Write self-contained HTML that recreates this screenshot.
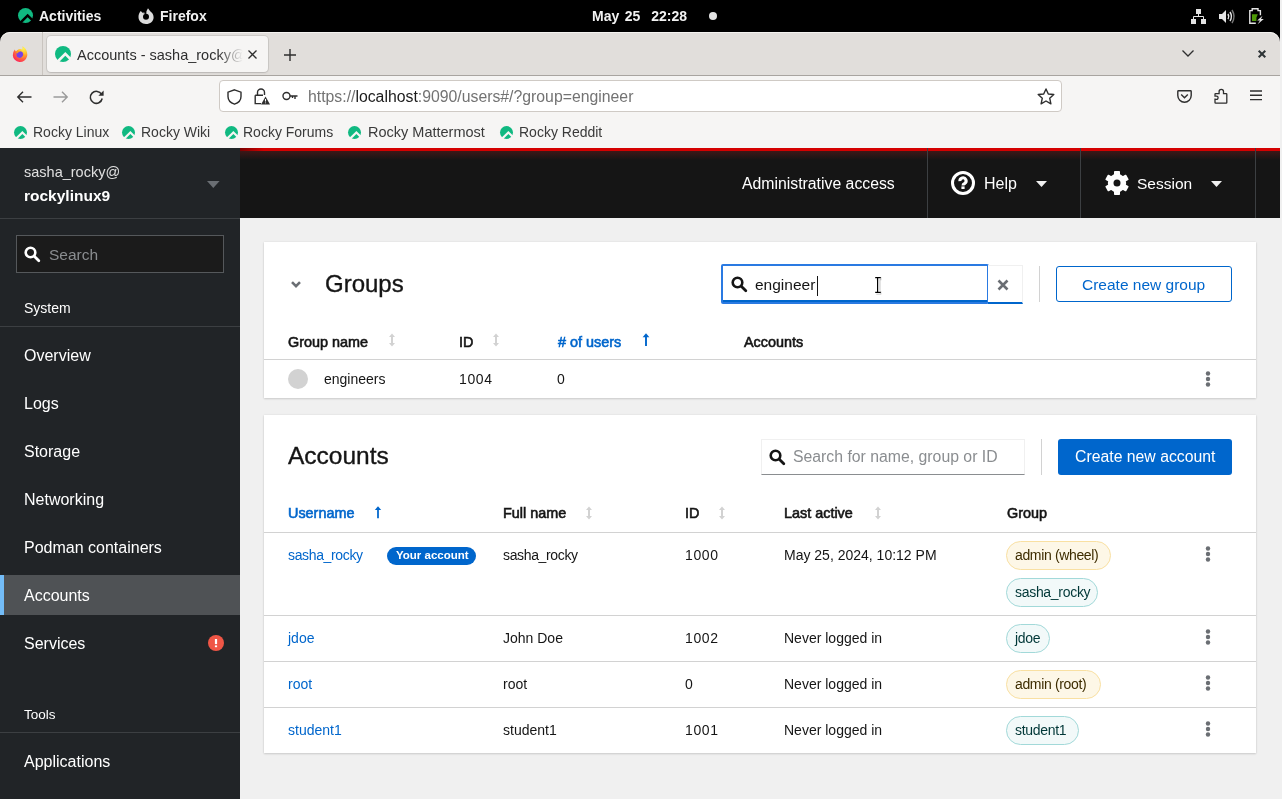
<!DOCTYPE html>
<html><head><meta charset="utf-8">
<style>
html,body{margin:0;padding:0;}
body{width:1282px;height:799px;overflow:hidden;position:relative;background:#ebebeb;font-family:"Liberation Sans",sans-serif;}
.a{position:absolute;}
.t{position:absolute;line-height:1;white-space:nowrap;will-change:transform;}
svg{position:absolute;display:block;overflow:visible;}
</style></head><body>
<svg width="0" height="0" style="position:absolute;left:0;top:0"><defs><mask id="rm" maskUnits="userSpaceOnUse" x="-2" y="-2" width="20" height="20"><rect x="-2" y="-2" width="20" height="20" fill="#fff"/><path d="M-2,18.3L10.3,6L22.6,18.3V22.1L10.3,9.8L-2,22.1Z" fill="#000"/></mask></defs></svg>
<!-- GNOME top bar -->
<div class="a" style="left:0;top:0;width:1280px;height:44px;background:#000;"></div>
<div class="a" style="left:1280px;top:0;width:2px;height:799px;background:#f0f0f0;"></div>
<!-- ROCKY ICON activities -->
<svg style="left:18px;top:8px" width="15" height="15" viewBox="0 0 16 16"><circle cx="8" cy="8" r="8" fill="#10b981" mask="url(#rm)"/></svg>
<div class="t" style="left:39px;top:9px;font-size:14px;font-weight:bold;color:#f2f2f2;">Activities</div>
<svg style="left:138px;top:8px" width="16" height="16" viewBox="0 0 16 16"><path fill="#dcdcdc" fill-rule="evenodd" d="M10,0.2L12.2,3.2C14.3,4.5 15.6,6.7 15.6,9.2C15.6,13.2 12.2,16 8,16C3.8,16 0.5,13 0.5,9C0.5,6.7 1.3,4.6 2.8,3L4.4,4.8L6.2,4.4L8.6,5.4C8.2,4.6 8.3,3.6 8.8,2.6Z M8,5.7A3,3 0 1 0 8,11.7A3,3 0 1 0 8,5.7Z"/><path d="M8.2,6.2L5.2,4.9L7.9,4.1Z" fill="#000"/></svg>
<div class="t" style="left:160px;top:9px;font-size:14px;font-weight:bold;color:#f2f2f2;">Firefox</div>
<div class="t" style="left:592px;top:9px;font-size:14px;font-weight:bold;color:#f2f2f2;word-spacing:1.6px;">May 25&nbsp; 22:28</div>
<div class="a" style="left:709px;top:12px;width:8px;height:8px;border-radius:50%;background:#e4e4e4;"></div>
<!-- network -->
<svg style="left:1191px;top:9px" width="16" height="15" viewBox="0 0 16 15"><rect x="5" y="0" width="5" height="5" fill="#e4e4e4"/><rect x="0" y="10" width="5" height="5" fill="#e4e4e4"/><rect x="10" y="10" width="5" height="5" fill="#e4e4e4"/><path d="M7.5,5V8M2.5,10V7.5H12.5V10" stroke="#e4e4e4" stroke-width="1" fill="none"/></svg>
<!-- volume -->
<svg style="left:1219px;top:9px" width="16" height="15" viewBox="0 0 16 15"><path d="M0,5H3L7,1V14L3,10H0Z" fill="#e4e4e4"/><path d="M9,5 Q10.5,7.5 9,10" stroke="#e4e4e4" stroke-width="1.5" fill="none"/><path d="M11,3 Q13.8,7.5 11,12" stroke="#e4e4e4" stroke-width="1.5" fill="none"/><path d="M13,1 Q17,7.5 13,14" stroke="#777" stroke-width="1.5" fill="none"/></svg>
<!-- battery -->
<svg style="left:1249px;top:8px" width="15" height="16" viewBox="0 0 15 16"><path d="M6.8,15.2H0.8V2.6H3.2V0.8H9V2.6H11.4V7.2" stroke="#e4e4e4" stroke-width="1.4" fill="none"/><path d="M3,6.2H8.8L7.4,9.6V13H3Z" fill="#4e9a06"/><path d="M13.5,7.8L8.2,12.6H11L8.6,16.2L14.8,10.9H12Z" fill="#e4e4e4"/></svg>

<!-- FIREFOX CHROME -->
<div class="a" style="left:0;top:32px;width:1280px;height:43px;background:#e1dedb;border-radius:10px 10px 0 0;box-shadow:inset 0 1px 0 #f4f2f0;"></div>
<div class="a" style="left:0;top:75px;width:1280px;height:1px;background:#a8a4a0;"></div>
<div class="a" style="left:0;top:76px;width:1280px;height:72px;background:#f6f5f4;"></div>
<!-- firefox logo -->
<svg style="left:12px;top:46px" width="16" height="16" viewBox="0 0 16 16"><defs><radialGradient id="ffg" cx="0.75" cy="0.15" r="1"><stop offset="0" stop-color="#fff44f"/><stop offset="0.35" stop-color="#ffbd2e"/><stop offset="0.6" stop-color="#ff7139"/><stop offset="0.85" stop-color="#ff3750"/><stop offset="1" stop-color="#f5156c"/></radialGradient></defs><path d="M10.5,0.2Q14.2,2.2 15,6.5Q15.6,9 15,10.5A7.2,7.2 0 0 1 0.8,9.2Q0.8,6 2.8,3.6Q3.2,5 4,5.6Q4.8,3.8 6.8,3.2Q8.8,2.8 10.2,3.6Q10.8,2 10.5,0.2Z" fill="url(#ffg)"/><circle cx="7.8" cy="8.6" r="3.3" fill="#7542e5"/><path d="M4.2,5.2Q6.5,4.2 8.6,5.6Q6.6,5.8 5.4,7.4Q4.6,6.4 4.2,5.2Z" fill="#ff9a1f"/><path d="M11.2,6.5Q11.8,10.6 8.6,12Q11.5,12.2 12.6,9.2Z" fill="#ff9a1f"/></svg>
<div class="a" style="left:42px;top:32px;width:1px;height:43px;background:#c9c4bf;"></div>
<!-- active tab -->
<div class="a" style="left:47px;top:36px;width:221px;height:36px;background:#f6f5f4;border-radius:4px;box-shadow:0 0 0 1px rgba(0,0,0,0.08),0 1px 2px rgba(0,0,0,0.1);"></div>
<svg style="left:55px;top:46px" width="16" height="16" viewBox="0 0 16 16"><circle cx="8" cy="8" r="8" fill="#10b981" mask="url(#rm)"/></svg>
<div class="t" style="left:77px;top:48px;font-size:14.5px;color:#2e2e2e;width:166px;overflow:hidden;-webkit-mask-image:linear-gradient(90deg,#000 85%,transparent);">Accounts - sasha_rocky@localhost</div>
<svg style="left:248px;top:50px" width="9" height="9" viewBox="0 0 9 9"><path d="M0.5,0.5L8.5,8.5M8.5,0.5L0.5,8.5" stroke="#2e2e2e" stroke-width="1.3"/></svg>
<svg style="left:284px;top:49px" width="12" height="12" viewBox="0 0 12 12"><path d="M6,0V12M0,6H12" stroke="#2e2e2e" stroke-width="1.4"/></svg>
<svg style="left:1182px;top:50px" width="12" height="7" viewBox="0 0 12 7"><path d="M0.5,0.5L6,6L11.5,0.5" stroke="#2e2e2e" stroke-width="1.3" fill="none"/></svg>
<svg style="left:1258px;top:50px" width="8" height="8" viewBox="0 0 8 8"><path d="M0.7,0.7L7.3,7.3M7.3,0.7L0.7,7.3" stroke="#2e3436" stroke-width="2"/></svg>

<!-- nav bar -->
<svg style="left:17px;top:91px" width="15" height="12" viewBox="0 0 15 12"><path d="M14.5,6H1.2M6,0.8L0.8,6L6,11.2" stroke="#2e2e2e" stroke-width="1.4" fill="none"/></svg>
<svg style="left:53px;top:91px" width="15" height="12" viewBox="0 0 15 12"><path d="M0.5,6H13.8M9,0.8L14.2,6L9,11.2" stroke="#9a9a9a" stroke-width="1.4" fill="none"/></svg>
<svg style="left:89px;top:90px" width="15" height="14" viewBox="0 0 15 14"><path d="M12.6,4.5 A6,6 0 1 0 13.2,8.5" stroke="#2e2e2e" stroke-width="1.5" fill="none"/><path d="M14.6,0.6V5.8H9.4Z" fill="#2e2e2e"/></svg>
<div class="a" style="left:219px;top:80px;width:841px;height:30px;background:#fff;border:1px solid #cfcac5;border-radius:4px;"></div>
<svg style="left:227px;top:89px" width="15" height="16" viewBox="0 0 15 16"><path d="M7.5,0.8L14,3.2V7.5C14,11.2 11.2,14 7.5,15.2C3.8,14 1,11.2 1,7.5V3.2Z" stroke="#2e2e2e" stroke-width="1.4" fill="none"/></svg>
<svg style="left:254px;top:88px" width="16" height="17" viewBox="0 0 16 17"><path d="M3.5,7V4.5A3.5,3.5 0 0 1 10.5,4.5V7" stroke="#2e2e2e" stroke-width="1.4" fill="none"/><path d="M1.2,7.3H9M1.2,7.3V15.6H7" stroke="#2e2e2e" stroke-width="1.4" fill="none"/><path d="M11.5,8.5L16,16.5H7Z" fill="#2e2e2e"/><path d="M11.5,11V13.6M11.5,14.4V15.3" stroke="#fff" stroke-width="1.1"/></svg>
<svg style="left:282px;top:91px" width="16" height="10" viewBox="0 0 16 10"><circle cx="4.5" cy="5" r="3.5" stroke="#2e2e2e" stroke-width="1.4" fill="none"/><path d="M8,5H15.5M13,5V8M10.5,5V7" stroke="#2e2e2e" stroke-width="1.4" fill="none"/></svg>
<div class="t" style="left:308px;top:89px;font-size:15.8px;color:#737373;"><span>https://</span><span style="color:#1b1b1b">localhost</span>:9090/users#/?group=engineer</div>
<svg style="left:1037px;top:88px" width="18" height="17" viewBox="0 0 18 17"><path d="M9,1L11.3,6L16.8,6.5L12.7,10.2L13.9,15.8L9,13L4.1,15.8L5.3,10.2L1.2,6.5L6.7,6Z" stroke="#2e2e2e" stroke-width="1.4" fill="none" stroke-linejoin="round"/></svg>
<svg style="left:1177px;top:90px" width="15" height="13" viewBox="0 0 15 13"><path d="M1.5,0.8H13.5Q14.2,0.8 14.2,1.5V5.5A6.7,6.7 0 0 1 0.8,5.5V1.5Q0.8,0.8 1.5,0.8Z" stroke="#2e2e2e" stroke-width="1.4" fill="none"/><path d="M4.2,4.5L7.5,7.7L10.8,4.5" stroke="#2e2e2e" stroke-width="1.4" fill="none"/></svg>
<svg style="left:1214px;top:88px" width="14" height="16" viewBox="0 0 14 16"><path d="M1,10.5V14.6Q1,15.2 1.6,15.2H12.2Q12.8,15.2 12.8,14.6V6.2Q12.8,5.6 12.2,5.6H9.5V3.5A2.2,2.2 0 0 0 5.1,3.5V5.6H1.6Q1,5.6 1,6.2V8.2H2.5A1.6,1.6 0 0 1 2.5,11.4H1Z" stroke="#2e2e2e" stroke-width="1.3" fill="none"/></svg>
<svg style="left:1250px;top:90px" width="12" height="11" viewBox="0 0 12 11"><path d="M0,1H12M0,5.3H12M0,9.6H12" stroke="#2e2e2e" stroke-width="1.4"/></svg>

<!-- bookmarks -->
<svg style="left:14px;top:126px" width="13" height="13" viewBox="0 0 16 16"><circle cx="8" cy="8" r="8" fill="#10b981" mask="url(#rm)"/></svg>
<div class="t" style="left:32.5px;top:124.6px;font-size:14px;color:#3a3a3a;">Rocky Linux</div>
<svg style="left:121.5px;top:126px" width="13" height="13" viewBox="0 0 16 16"><circle cx="8" cy="8" r="8" fill="#10b981" mask="url(#rm)"/></svg>
<div class="t" style="left:141px;top:124.6px;font-size:14px;color:#3a3a3a;">Rocky Wiki</div>
<svg style="left:224.5px;top:126px" width="13" height="13" viewBox="0 0 16 16"><circle cx="8" cy="8" r="8" fill="#10b981" mask="url(#rm)"/></svg>
<div class="t" style="left:243.4px;top:124.6px;font-size:14px;color:#3a3a3a;">Rocky Forums</div>
<svg style="left:348px;top:126px" width="13" height="13" viewBox="0 0 16 16"><circle cx="8" cy="8" r="8" fill="#10b981" mask="url(#rm)"/></svg>
<div class="t" style="left:367.5px;top:124.6px;font-size:14.5px;color:#3a3a3a;">Rocky Mattermost</div>
<svg style="left:499.5px;top:126px" width="13" height="13" viewBox="0 0 16 16"><circle cx="8" cy="8" r="8" fill="#10b981" mask="url(#rm)"/></svg>
<div class="t" style="left:518.7px;top:124.6px;font-size:14px;color:#3a3a3a;">Rocky Reddit</div>

<!-- COCKPIT SIDEBAR -->
<div class="a" style="left:0;top:148px;width:240px;height:651px;background:#212427;"></div>
<div class="t" style="left:24px;top:164.7px;font-size:14.5px;color:#e0e0e0;">sasha_rocky@</div>
<div class="t" style="left:24px;top:187.9px;font-size:15.5px;font-weight:bold;color:#fff;">rockylinux9</div>
<svg style="left:207px;top:181px" width="13" height="8" viewBox="0 0 13 8"><path d="M0,0H12.6L6.3,7Z" fill="#6a6e73"/></svg>
<div class="a" style="left:0;top:218px;width:240px;height:1px;background:#3c3f42;"></div>
<div class="a" style="left:16px;top:235px;width:206px;height:36px;background:#1b1b1b;border:1px solid #55585b;"></div>
<svg style="left:24px;top:246px" width="16" height="16" viewBox="0 0 16 16"><circle cx="6.5" cy="6.5" r="4.8" stroke="#fff" stroke-width="2.6" fill="none"/><path d="M10,10L14.8,14.8" stroke="#fff" stroke-width="2.8" stroke-linecap="round"/></svg>
<div class="t" style="left:49px;top:246.9px;font-size:15.5px;color:#8a8d90;">Search</div>
<div class="t" style="left:24px;top:301.2px;font-size:14px;color:#fff;">System</div>
<div class="a" style="left:0;top:326px;width:240px;height:1px;background:#3c3f42;"></div>
<div class="t" style="left:24px;top:347.5px;font-size:16px;color:#fff;">Overview</div>
<div class="t" style="left:24px;top:395.5px;font-size:16px;color:#fff;">Logs</div>
<div class="t" style="left:24px;top:443.5px;font-size:16px;color:#fff;">Storage</div>
<div class="t" style="left:24px;top:491.5px;font-size:16px;color:#fff;">Networking</div>
<div class="t" style="left:24px;top:539.5px;font-size:16px;color:#fff;">Podman containers</div>
<div class="a" style="left:0;top:575px;width:240px;height:40px;background:#4f5255;"></div>
<div class="a" style="left:0;top:575px;width:4px;height:40px;background:#73bcf7;"></div>
<div class="t" style="left:24px;top:587.5px;font-size:16px;color:#fff;">Accounts</div>
<div class="t" style="left:24px;top:635.5px;font-size:16px;color:#fff;">Services</div>
<svg style="left:208px;top:635px" width="16" height="16" viewBox="0 0 16 16"><circle cx="8" cy="8" r="8" fill="#ef5646"/><rect x="6.9" y="4" width="2.2" height="5.1" fill="#fff"/><rect x="6.9" y="10.4" width="2.2" height="1.8" fill="#fff"/></svg>
<div class="t" style="left:24px;top:707.9px;font-size:13.5px;color:#fff;">Tools</div>
<div class="a" style="left:0;top:732px;width:240px;height:1px;background:#3c3f42;"></div>
<div class="t" style="left:24px;top:753.5px;font-size:16px;color:#fff;">Applications</div>

<!-- HEADER -->
<div class="a" style="left:240px;top:148px;width:1040px;height:70px;background:#151515;"></div>
<div class="a" style="left:240px;top:151px;width:1040px;height:9px;background:linear-gradient(180deg,#3d1717,rgba(21,21,21,0));"></div>
<div class="a" style="left:240px;top:148px;width:1040px;height:3px;background:linear-gradient(90deg,#7a0000,#d40000 24px);"></div>
<div class="a" style="left:927px;top:148px;width:1px;height:70px;background:#3c3f42;"></div>
<div class="a" style="left:1080px;top:148px;width:1px;height:70px;background:#3c3f42;"></div>
<div class="a" style="left:1255px;top:148px;width:1px;height:70px;background:#3c3f42;"></div>
<div class="t" style="left:742px;top:175.8px;font-size:15.8px;color:#fff;">Administrative access</div>
<svg style="left:951px;top:171px" width="24" height="24" viewBox="0 0 24 24"><circle cx="12" cy="12" r="10.5" stroke="#fff" stroke-width="3" fill="none"/><path d="M8.9,10.2A3.1,3.1 0 1 1 13.7,12.5Q12,13.3 12,14.6" stroke="#fff" stroke-width="3.1" fill="none"/><rect x="10.4" y="15.4" width="3.2" height="2.6" fill="#fff"/></svg>
<div class="t" style="left:984px;top:175.8px;font-size:16px;color:#fff;">Help</div>
<svg style="left:1035.5px;top:181px" width="11" height="6" viewBox="0 0 11 6"><path d="M0,0H11L5.5,6Z" fill="#f0f0f0"/></svg>
<svg style="left:1105px;top:171px" width="24" height="24" viewBox="0 0 24 24"><g fill="#fff"><circle cx="12" cy="12" r="9.2"/><rect x="9" y="0" width="6" height="24" rx="0.8"/><rect x="9" y="0" width="6" height="24" rx="0.8" transform="rotate(60 12 12)"/><rect x="9" y="0" width="6" height="24" rx="0.8" transform="rotate(120 12 12)"/></g><circle cx="12" cy="12" r="3.5" fill="#151515"/></svg>
<div class="t" style="left:1137px;top:175.8px;font-size:15.5px;color:#fff;">Session</div>
<svg style="left:1211px;top:181px" width="11" height="6" viewBox="0 0 11 6"><path d="M0,0H11L5.5,6Z" fill="#f0f0f0"/></svg>

<!-- MAIN -->
<div class="a" style="left:240px;top:218px;width:1040px;height:581px;background:#f0f0f0;"></div>
<!-- GROUPS CARD -->
<div class="a" style="left:264px;top:242px;width:992px;height:156px;background:#fff;box-shadow:0 1px 2px rgba(3,3,3,0.14),0 0 2px rgba(3,3,3,0.08);"></div>
<svg style="left:291px;top:281px" width="10" height="7" viewBox="0 0 10 7"><path d="M1,1.2L5,5.2L9,1.2" stroke="#6a6e73" stroke-width="2.6" fill="none"/></svg>
<div class="t" style="left:325px;top:272.3px;font-size:24px;color:#151515;-webkit-text-stroke:0.35px #151515;">Groups</div>
<div class="a" style="left:721px;top:264px;width:264px;height:36px;border:2px solid #2a7ae2;border-radius:2px;background:#fff;"></div>
<div class="a" style="left:723px;top:300px;width:264px;height:2px;background:#0066cc;"></div>
<div class="a" style="left:988px;top:265px;width:34px;height:36px;border-top:1px solid #f0f0f0;border-right:1px solid #f0f0f0;border-bottom:2px solid #0066cc;background:#fff;"></div>
<svg style="left:731px;top:276px" width="16" height="16" viewBox="0 0 16 16"><circle cx="6.5" cy="6.5" r="4.8" stroke="#151515" stroke-width="2.6" fill="none"/><path d="M10,10L14.8,14.8" stroke="#151515" stroke-width="2.8" stroke-linecap="round"/></svg>
<div class="t" style="left:755px;top:276.9px;font-size:15.5px;color:#151515;">engineer</div>
<div class="a" style="left:817px;top:276px;width:1px;height:20px;background:#151515;"></div>
<svg style="left:873px;top:275px" width="10" height="20" viewBox="0 0 10 20"><path d="M2.5,2.8H7.5M2.5,17.2H7.5M5,2.8V17.2" stroke="#bbb" stroke-width="3.2" transform="translate(0.8,0.8)"/><path d="M2.5,2.8H7.5M2.5,17.2H7.5M5,2.8V17.2" stroke="#fff" stroke-width="3"/><path d="M2.2,2.6H7.8M2.2,17.4H7.8M4.6,2.6V17.4" stroke="#000" stroke-width="1.2"/></svg>
<svg style="left:997px;top:279px" width="12" height="12" viewBox="0 0 12 12"><path d="M1.5,1.5L10.5,10.5M10.5,1.5L1.5,10.5" stroke="#6a6e73" stroke-width="2.6"/></svg>
<div class="a" style="left:1039px;top:266px;width:1px;height:36px;background:#d2d2d2;"></div>
<div class="a" style="left:1056px;top:266px;width:174px;height:34px;border:1px solid #0066cc;border-radius:3px;"></div>
<div class="t" style="left:1081.5px;top:276.9px;font-size:15.5px;color:#0066cc;">Create new group</div>

<div class="t" style="left:288px;top:334.5px;font-size:14.4px;color:#151515;-webkit-text-stroke:0.6px #151515;">Group name</div>
<svg style="left:389px;top:333px" width="6" height="14" viewBox="0 0 6 14"><path d="M3,2.5V11.5" stroke="#d2d2d2" stroke-width="2"/><path d="M0,4L3,0.5L6,4ZM0,10L3,13.5L6,10Z" fill="#d2d2d2"/></svg>
<div class="t" style="left:458.7px;top:334.5px;font-size:14.4px;color:#151515;-webkit-text-stroke:0.6px #151515;">ID</div>
<svg style="left:493px;top:333px" width="6" height="14" viewBox="0 0 6 14"><path d="M3,2.5V11.5" stroke="#d2d2d2" stroke-width="2"/><path d="M0,4L3,0.5L6,4ZM0,10L3,13.5L6,10Z" fill="#d2d2d2"/></svg>
<div class="t" style="left:557.8px;top:334.5px;font-size:14.4px;color:#0066cc;-webkit-text-stroke:0.6px #0066cc;"># of users</div>
<svg style="left:642px;top:333px" width="8" height="15" viewBox="0 0 8 15"><path d="M4,2V13" stroke="#0066cc" stroke-width="1.9"/><path d="M0.6,4.2L4,0.3L7.4,4.2Z" fill="#0066cc"/></svg>
<div class="t" style="left:744px;top:334.5px;font-size:14.4px;color:#151515;-webkit-text-stroke:0.6px #151515;">Accounts</div>
<div class="a" style="left:264px;top:359px;width:992px;height:1px;background:#d2d2d2;"></div>
<div class="a" style="left:288px;top:369px;width:20px;height:20px;border-radius:50%;background:#d2d2d2;"></div>
<div class="t" style="left:324px;top:372.2px;font-size:14px;color:#151515;">engineers</div>
<div class="t" style="left:459px;top:372.2px;font-size:14px;letter-spacing:0.6px;color:#151515;">1004</div>
<div class="t" style="left:557px;top:372.2px;font-size:14px;color:#151515;">0</div>
<svg style="left:1205px;top:371px" width="6" height="16" viewBox="0 0 6 16"><circle cx="3" cy="2.5" r="2.2" fill="#6a6e73"/><circle cx="3" cy="8" r="2.2" fill="#6a6e73"/><circle cx="3" cy="13.5" r="2.2" fill="#6a6e73"/></svg>

<!-- ACCOUNTS CARD -->
<div class="a" style="left:264px;top:415px;width:992px;height:338px;background:#fff;box-shadow:0 1px 2px rgba(3,3,3,0.14),0 0 2px rgba(3,3,3,0.08);"></div>
<div class="t" style="left:288.4px;top:444.3px;font-size:24.5px;color:#151515;-webkit-text-stroke:0.35px #151515;">Accounts</div>
<div class="a" style="left:761px;top:439px;width:262px;height:34px;border:1px solid #f0f0f0;border-bottom:1px solid #8a8d90;"></div>
<svg style="left:769px;top:449px" width="16" height="16" viewBox="0 0 16 16"><circle cx="6.5" cy="6.5" r="4.8" stroke="#151515" stroke-width="2.6" fill="none"/><path d="M10,10L14.8,14.8" stroke="#151515" stroke-width="2.8" stroke-linecap="round"/></svg>
<div class="t" style="left:792.7px;top:449px;font-size:15.8px;color:#8a8d90;">Search for name, group or ID</div>
<div class="a" style="left:1041px;top:439px;width:1px;height:36px;background:#d2d2d2;"></div>
<div class="a" style="left:1058px;top:439px;width:174px;height:36px;background:#0066cc;border-radius:3px;"></div>
<div class="t" style="left:1074.7px;top:449px;font-size:15.8px;color:#fff;">Create new account</div>

<div class="t" style="left:288px;top:505.9px;font-size:14.4px;color:#0066cc;-webkit-text-stroke:0.6px #0066cc;">Username</div>
<svg style="left:374px;top:506px" width="8" height="14" viewBox="0 0 8 15"><path d="M4,2V13" stroke="#0066cc" stroke-width="1.9"/><path d="M0.6,4.2L4,0.3L7.4,4.2Z" fill="#0066cc"/></svg>
<div class="t" style="left:503.3px;top:505.9px;font-size:14.4px;color:#151515;-webkit-text-stroke:0.6px #151515;">Full name</div>
<svg style="left:586px;top:506px" width="6" height="14" viewBox="0 0 6 14"><path d="M3,2.5V11.5" stroke="#d2d2d2" stroke-width="2"/><path d="M0,4L3,0.5L6,4ZM0,10L3,13.5L6,10Z" fill="#d2d2d2"/></svg>
<div class="t" style="left:685px;top:505.9px;font-size:14.4px;color:#151515;-webkit-text-stroke:0.6px #151515;">ID</div>
<svg style="left:719px;top:506px" width="6" height="14" viewBox="0 0 6 14"><path d="M3,2.5V11.5" stroke="#d2d2d2" stroke-width="2"/><path d="M0,4L3,0.5L6,4ZM0,10L3,13.5L6,10Z" fill="#d2d2d2"/></svg>
<div class="t" style="left:783.8px;top:505.9px;font-size:14.4px;color:#151515;-webkit-text-stroke:0.6px #151515;">Last active</div>
<svg style="left:875px;top:506px" width="6" height="14" viewBox="0 0 6 14"><path d="M3,2.5V11.5" stroke="#d2d2d2" stroke-width="2"/><path d="M0,4L3,0.5L6,4ZM0,10L3,13.5L6,10Z" fill="#d2d2d2"/></svg>
<div class="t" style="left:1006.5px;top:505.9px;font-size:14.4px;color:#151515;-webkit-text-stroke:0.6px #151515;">Group</div>
<div class="a" style="left:264px;top:532px;width:992px;height:1px;background:#d2d2d2;"></div>

<div class="t" style="left:288px;top:548.2px;font-size:14px;letter-spacing:-0.35px;color:#0066cc;">sasha_rocky</div>
<div class="a" style="left:387px;top:547px;width:89px;height:18px;border-radius:9px;background:#0066cc;"></div>
<div class="t" style="left:396px;top:550.3px;font-size:11.5px;font-weight:bold;color:#fff;">Your account</div>
<div class="t" style="left:503.3px;top:548.2px;font-size:14px;letter-spacing:-0.35px;color:#151515;">sasha_rocky</div>
<div class="t" style="left:685px;top:548.2px;font-size:14px;letter-spacing:0.6px;color:#151515;">1000</div>
<div class="t" style="left:784px;top:548.2px;font-size:14px;color:#151515;">May 25, 2024, 10:12 PM</div>
<div class="a" style="left:1006px;top:541px;width:103px;height:27px;border:1px solid #f9e0a2;border-radius:15px;background:#fdf7e7;"></div>
<div class="t" style="left:1014.7px;top:548.2px;font-size:14px;letter-spacing:-0.35px;color:#3d2c00;">admin (wheel)</div>
<div class="a" style="left:1006px;top:578px;width:90px;height:27px;border:1px solid #a2d9d9;border-radius:15px;background:#f2f9f9;"></div>
<div class="t" style="left:1014.7px;top:585px;font-size:14px;letter-spacing:-0.3px;color:#003737;">sasha_rocky</div>
<svg style="left:1205px;top:546px" width="6" height="16" viewBox="0 0 6 16"><circle cx="3" cy="2.5" r="2.2" fill="#6a6e73"/><circle cx="3" cy="8" r="2.2" fill="#6a6e73"/><circle cx="3" cy="13.5" r="2.2" fill="#6a6e73"/></svg>
<div class="a" style="left:264px;top:615px;width:992px;height:1px;background:#d2d2d2;"></div>

<div class="t" style="left:288px;top:630.8px;font-size:14px;color:#0066cc;">jdoe</div>
<div class="t" style="left:503.3px;top:630.8px;font-size:14px;color:#151515;">John Doe</div>
<div class="t" style="left:685px;top:630.8px;font-size:14px;letter-spacing:0.6px;color:#151515;">1002</div>
<div class="t" style="left:784px;top:630.8px;font-size:14px;color:#151515;">Never logged in</div>
<div class="a" style="left:1006px;top:624px;width:42px;height:27px;border:1px solid #a2d9d9;border-radius:15px;background:#f2f9f9;"></div>
<div class="t" style="left:1014.7px;top:630.8px;font-size:14px;letter-spacing:-0.3px;color:#003737;">jdoe</div>
<svg style="left:1205px;top:629px" width="6" height="16" viewBox="0 0 6 16"><circle cx="3" cy="2.5" r="2.2" fill="#6a6e73"/><circle cx="3" cy="8" r="2.2" fill="#6a6e73"/><circle cx="3" cy="13.5" r="2.2" fill="#6a6e73"/></svg>
<div class="a" style="left:264px;top:661px;width:992px;height:1px;background:#d2d2d2;"></div>

<div class="t" style="left:288px;top:676.8px;font-size:14px;color:#0066cc;">root</div>
<div class="t" style="left:503.3px;top:676.8px;font-size:14px;color:#151515;">root</div>
<div class="t" style="left:685px;top:676.8px;font-size:14px;color:#151515;">0</div>
<div class="t" style="left:784px;top:676.8px;font-size:14px;color:#151515;">Never logged in</div>
<div class="a" style="left:1006px;top:670px;width:93px;height:27px;border:1px solid #f9e0a2;border-radius:15px;background:#fdf7e7;"></div>
<div class="t" style="left:1014.7px;top:676.8px;font-size:14px;letter-spacing:-0.35px;color:#3d2c00;">admin (root)</div>
<svg style="left:1205px;top:675px" width="6" height="16" viewBox="0 0 6 16"><circle cx="3" cy="2.5" r="2.2" fill="#6a6e73"/><circle cx="3" cy="8" r="2.2" fill="#6a6e73"/><circle cx="3" cy="13.5" r="2.2" fill="#6a6e73"/></svg>
<div class="a" style="left:264px;top:707px;width:992px;height:1px;background:#d2d2d2;"></div>

<div class="t" style="left:288px;top:722.8px;font-size:14px;color:#0066cc;">student1</div>
<div class="t" style="left:503.3px;top:722.8px;font-size:14px;color:#151515;">student1</div>
<div class="t" style="left:685px;top:722.8px;font-size:14px;letter-spacing:0.6px;color:#151515;">1001</div>
<div class="t" style="left:784px;top:722.8px;font-size:14px;color:#151515;">Never logged in</div>
<div class="a" style="left:1006px;top:716px;width:71px;height:27px;border:1px solid #a2d9d9;border-radius:15px;background:#f2f9f9;"></div>
<div class="t" style="left:1014.7px;top:722.8px;font-size:14px;letter-spacing:-0.3px;color:#003737;">student1</div>
<svg style="left:1205px;top:721px" width="6" height="16" viewBox="0 0 6 16"><circle cx="3" cy="2.5" r="2.2" fill="#6a6e73"/><circle cx="3" cy="8" r="2.2" fill="#6a6e73"/><circle cx="3" cy="13.5" r="2.2" fill="#6a6e73"/></svg>


</body></html>
